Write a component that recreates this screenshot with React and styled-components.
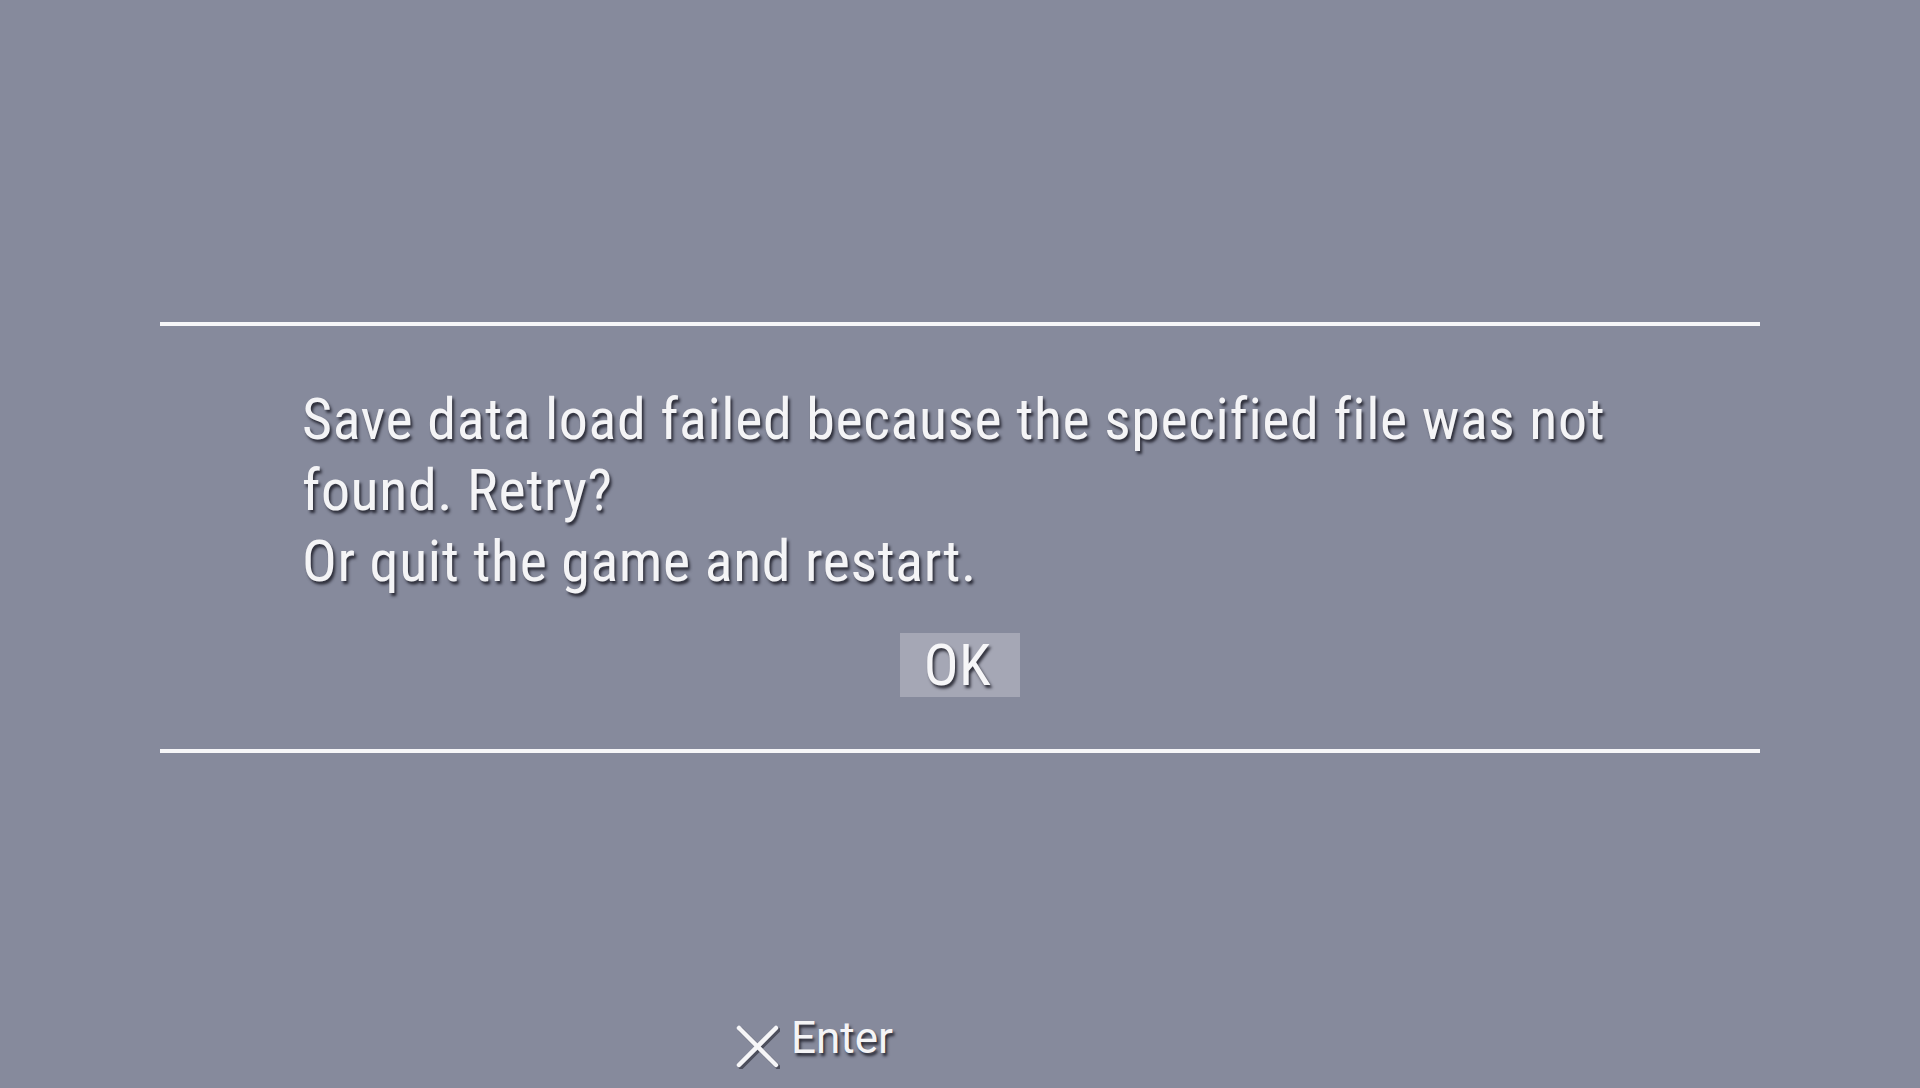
import React from "react";
import styled, { createGlobalStyle } from "styled-components";

const GlobalStyle = createGlobalStyle`
  html, body {
    margin: 0;
    padding: 0;
    background: #868a9c;
  }
  body {
    font-family: "Roboto Condensed", Roboto, "Liberation Sans", sans-serif;
    color: #f4f4f6;
  }
`;

const Screen = styled.div`
  height: 1088px;
  width: 1920px;
  display: flex;
  flex-direction: column;
  overflow: hidden;
  padding-top: 322px;
  box-sizing: border-box;
`;

const Dialog = styled.section`
  margin: 0 160px;
  border-top: 4px solid #f6f6f8;
  border-bottom: 4px solid #f6f6f8;
  padding: 58px 0 52px;
  display: flex;
  flex-direction: column;
`;

const Message = styled.p`
  margin: 0;
  padding-left: 142px;
  font-size: 58px;
  letter-spacing: 0.58px;
  line-height: 71px;
  text-shadow: 2px 3px 3px rgba(20, 20, 30, 0.8);
`;

const ButtonRow = styled.div`
  display: flex;
  justify-content: center;
  margin-top: 36px;
`;

const OkButton = styled.button`
  width: 120px;
  height: 64px;
  padding: 0 5px 0 0;
  border: none;
  background: #a5a7b5;
  color: #f6f6f8;
  font: inherit;
  font-size: 58px;
  letter-spacing: 0.6px;
  line-height: 64px;
  text-shadow: 2px 3px 3px rgba(20, 20, 30, 0.8);
  cursor: pointer;
`;

const Footer = styled.footer`
  margin-top: auto;
  padding: 0 0 19px 735px;
  display: flex;
  align-items: flex-start;
  gap: 11px;
`;

const Hint = styled.span`
  font-family: Roboto, "Liberation Sans", sans-serif;
  font-size: 44px;
  line-height: 52px;
  text-shadow: 2px 3px 3px rgba(20, 20, 30, 0.8);
`;

const CrossSvg = styled.svg`
  flex: none;
  margin-top: 13px;
`;

const CrossIcon = () => (
  <CrossSvg width="45" height="44" viewBox="0 0 45 44">
    <g stroke="rgba(20,20,30,0.5)" strokeWidth="5" strokeLinecap="round" transform="translate(2 2)">
      <line x1="4" y1="3" x2="41" y2="40" />
      <line x1="41" y1="3" x2="4" y2="40" />
    </g>
    <g stroke="#f6f6f8" strokeWidth="4.5" strokeLinecap="round">
      <line x1="4" y1="3" x2="41" y2="40" />
      <line x1="41" y1="3" x2="4" y2="40" />
    </g>
  </CrossSvg>
);

export default function App() {
  return (
    <>
      <GlobalStyle />
      <Screen>
        <Dialog>
          <Message>
            Save data load failed because the specified file was not
            <br />
            found. Retry?
            <br />
            Or quit the game and restart.
          </Message>
          <ButtonRow>
            <OkButton>OK</OkButton>
          </ButtonRow>
        </Dialog>
        <Footer>
          <CrossIcon />
          <Hint>Enter</Hint>
        </Footer>
      </Screen>
    </>
  );
}
